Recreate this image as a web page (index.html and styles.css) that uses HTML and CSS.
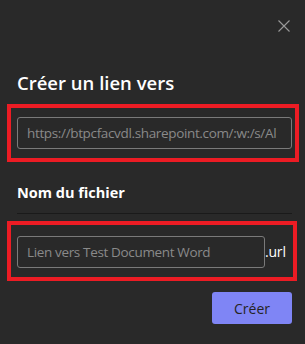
FILE: index.html
```html
<!DOCTYPE html>
<html lang="fr">
<head>
<meta charset="utf-8">
<link rel="stylesheet" href="styles.css">
</head>
<body>
<div class="dialog">
  <div class="top">
    <button class="close" aria-label="Fermer">
      <svg width="12" height="12" viewBox="0 0 12 12"><path d="M0.5 0.5 L11.5 11.5 M11.5 0.5 L0.5 11.5" stroke="#9a9a9a" stroke-width="1.1" fill="none"/></svg>
    </button>
  </div>
  <h1 class="title">Créer un lien vers</h1>
  <div class="mark mark-url">
    <div class="field field-url">https://btpcfacvdl.sharepoint.com/:w:/s/Al</div>
  </div>
  <div class="label">Nom du fichier</div>
  <div class="divider"></div>
  <div class="mark mark-name">
    <div class="name-row">
      <div class="field field-name">Lien vers Test Document Word</div>
      <span class="ext">.url</span>
    </div>
  </div>
  <div class="actions">
    <button class="primary">Créer</button>
  </div>
</div>
</body>
</html>
```
FILE: styles.css
```css
html, body {
  margin: 0;
  padding: 0;
  background: #292929;
}
body {
  width: 305px;
  height: 344px;
  overflow: hidden;
  font-family: "Open Sans", "Noto Sans", sans-serif;
  color: #ffffff;
}
.dialog {
  padding: 20px 13px 0 17px;
}
.top {
  display: flex;
  justify-content: flex-end;
  height: 12px;
  padding-right: 2px;
}
.close {
  width: 12px;
  height: 12px;
  padding: 0;
  border: 0;
  background: none;
  display: block;
}
.close svg { display: block; }
.title {
  margin: 39px 0 0 0;
  font-size: 18.5px;
  font-weight: 600;
  line-height: 24px;
  letter-spacing: 0;
}
.mark {
  border: 4px solid #ec1c24;
  margin-left: -10px;
}
.mark-url {
  margin-top: 9px;
  padding: 9px 3px 9px 6px;
  margin-right: -7px;
}
.field {
  height: 32px;
  box-sizing: border-box;
  border: 1px solid #7a7a7a;
  border-radius: 3px;
  padding: 0 9px;
  font-size: 13.5px;
  line-height: 30px;
  color: #8a8a8a;
  white-space: nowrap;
  overflow: hidden;
  letter-spacing: -0.35px;
}
.field-url {
  padding-right: 4px;
}
.label {
  margin-top: 21px;
  font-size: 14.5px;
  font-weight: 700;
  line-height: 20px;
  letter-spacing: 0;
}
.divider {
  margin-top: 10px;
  height: 1px;
  background: #1a1a1a;
}
.mark-name {
  margin-top: 7px;
  padding: 11px 0 9px 6px;
  margin-right: -5px;
}
.name-row {
  display: flex;
  align-items: center;
}
.field-name {
  width: 248px;
  flex: none;
}
.ext {
  font-size: 14px;
  line-height: 20px;
  color: #ffffff;
  letter-spacing: -0.2px;
}
.actions {
  display: flex;
  justify-content: flex-end;
  margin-top: 11px;
}
.primary {
  width: 80px;
  height: 32px;
  border: 0;
  border-radius: 3px;
  background: #7f85f5;
  color: #252423;
  font-family: "Open Sans", "Noto Sans", sans-serif;
  font-size: 14px;
  padding: 0;
}
```
